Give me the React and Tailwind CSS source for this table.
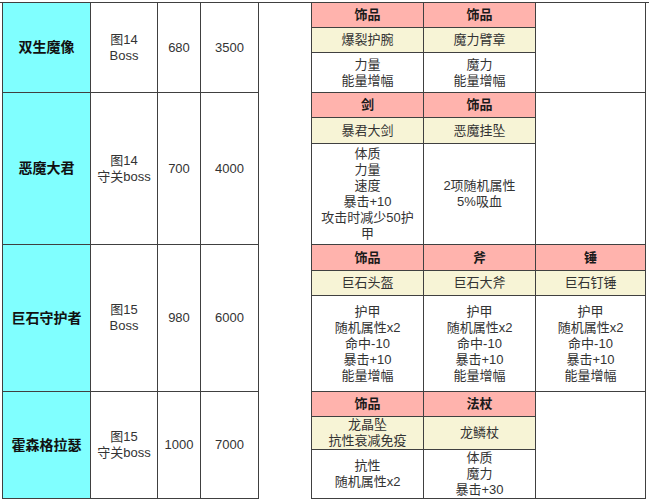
import React from "react";

const rows = [
  {
    h: "h-[90px]",
    name: "双生魔像",
    map: ["图14", "Boss"],
    hp: "680",
    atk: "3500",
    subs: ["h-[25px]", "h-[25px]", "h-[40px]"],
    items: [
      { type: "饰品", name: ["爆裂护腕"], desc: ["力量", "能量增幅"] },
      { type: "饰品", name: ["魔力臂章"], desc: ["魔力", "能量增幅"] },
      null,
    ],
  },
  {
    h: "h-[152px]",
    name: "恶魔大君",
    map: ["图14", "守关boss"],
    hp: "700",
    atk: "4000",
    subs: ["h-[25px]", "h-[26px]", "h-[101px]"],
    items: [
      {
        type: "剑",
        name: ["暴君大剑"],
        desc: ["体质", "力量", "速度", "暴击+10", "攻击时减少50护", "甲"],
      },
      { type: "饰品", name: ["恶魔挂坠"], desc: ["2项随机属性", "5%吸血"] },
      null,
    ],
  },
  {
    h: "h-[147px]",
    name: "巨石守护者",
    map: ["图15", "Boss"],
    hp: "980",
    atk: "6000",
    subs: ["h-[26px]", "h-[25px]", "h-[96px]"],
    items: [
      {
        type: "饰品",
        name: ["巨石头盔"],
        desc: ["护甲", "随机属性x2", "命中-10", "暴击+10", "能量增幅"],
      },
      {
        type: "斧",
        name: ["巨石大斧"],
        desc: ["护甲", "随机属性x2", "命中-10", "暴击+10", "能量增幅"],
      },
      {
        type: "锤",
        name: ["巨石钉锤"],
        desc: ["护甲", "随机属性x2", "命中-10", "暴击+10", "能量增幅"],
      },
    ],
  },
  {
    h: "h-[107px]",
    name: "霍森格拉瑟",
    map: ["图15", "守关boss"],
    hp: "1000",
    atk: "7000",
    subs: ["h-[25px]", "h-[33px]", "h-[49px]"],
    items: [
      {
        type: "饰品",
        name: ["龙晶坠", "抗性衰减免疫"],
        desc: ["抗性", "随机属性x2"],
      },
      { type: "法杖", name: ["龙鳞杖"], desc: ["体质", "魔力", "暴击+30"] },
      null,
    ],
  },
];

const itemWidths = ["w-[113px] border-l", "w-[112px]", "w-[110px]"];

function Lines({ lines }) {
  return (
    <div className="flex flex-col items-center">
      {lines.map((l, i) => (
        <span key={i} className="whitespace-nowrap leading-[16px]">
          {l}
        </span>
      ))}
    </div>
  );
}

function ItemCell({ item, subs, w }) {
  if (!item) {
    return <div className={`${w} border-r border-b border-[#404040] bg-white`} />;
  }
  return (
    <div className={`${w} flex flex-col border-r border-[#404040]`}>
      <div
        className={`${subs[0]} flex items-center justify-center border-b border-[#404040] bg-[#ffb3ad] text-[13px] font-bold text-[#1a1a1a]`}
      >
        {item.type}
      </div>
      <div
        className={`${subs[1]} flex items-center justify-center border-b border-[#404040] bg-[#f7f4d6] text-[13px] text-[#333]`}
      >
        <Lines lines={item.name} />
      </div>
      <div
        className={`${subs[2]} flex items-center justify-center border-b border-[#404040] bg-white text-[13px] text-[#333]`}
      >
        <Lines lines={item.desc} />
      </div>
    </div>
  );
}

function Row({ r }) {
  return (
    <div className={`flex pl-[2px] ${r.h}`}>
      <div className="w-[89px] flex items-center justify-center border-l border-r border-b border-[#404040] bg-[#80ffff] text-[14px] font-bold text-[#111]">
        {r.name}
      </div>
      <div className="w-[67px] flex items-center justify-center border-r border-b border-[#404040] text-[13px] text-[#333]">
        <Lines lines={r.map} />
      </div>
      <div className="w-[43px] flex items-center justify-center border-r border-b border-[#404040] text-[13px] text-[#333]">
        {r.hp}
      </div>
      <div className="w-[58px] flex items-center justify-center border-r border-b border-[#404040] text-[13px] text-[#333]">
        {r.atk}
      </div>
      <div className="w-[52px]" />
      {r.items.map((it, i) => (
        <ItemCell key={i} item={it} subs={r.subs} w={itemWidths[i]} />
      ))}
    </div>
  );
}

export default function App() {
  return (
    <div className="w-[649px] h-[500px] overflow-hidden bg-white pt-[2px] font-['Liberation_Sans','Noto_Sans_CJK_SC',sans-serif]">
      <div className="border-t border-[#404040]">
        {rows.map((r, i) => (
          <Row key={i} r={r} />
        ))}
      </div>
    </div>
  );
}
